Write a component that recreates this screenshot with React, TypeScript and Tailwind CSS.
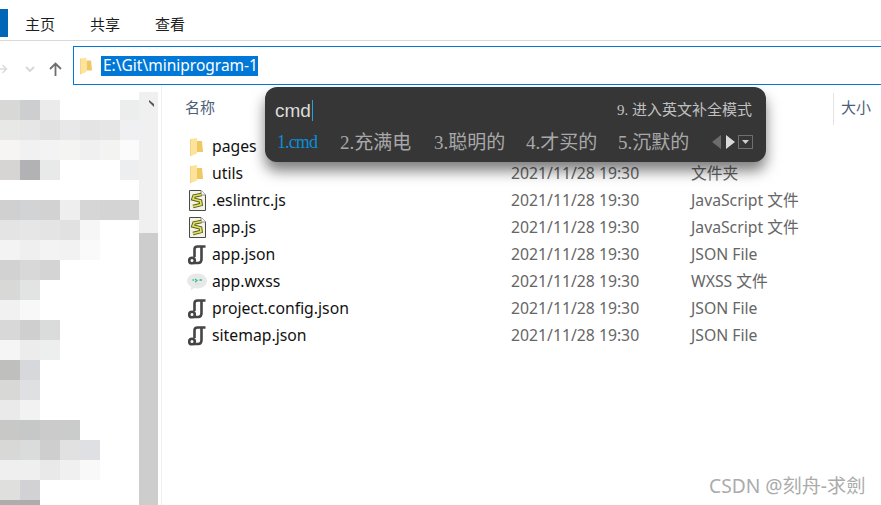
const latin = "font-['Noto_Sans','Noto_Sans_CJK_SC',sans-serif]";

// mosaic over the navigation pane, one row per 20px, one value per 20px column
const MOSAIC = [
  ["d8d8d6", "cdced0", "ebebeb", "ffffff", "ffffff", "ffffff", "eceded"],
  ["e8e8e6", "e6e6e6", "e1e1e1", "e8e8e8", "e4e4e4", "e6e6e6", "f0f0f2"],
  ["f6f5f3", "f1f1f1", "f3f3f3", "f4f4f2", "f0f0f0", "f3f3f1", "fbfbfb"],
  ["d6d5d3", "b2b2b4", "e8eaea", "ffffff", "ffffff", "ffffff", "eceef0"],
  ["ffffff", "ffffff", "ffffff", "ffffff", "ffffff", "ffffff", "ffffff"],
  ["d0d0d0", "d2d3d5", "d2d2d2", "eeeeee", "d6d6d6", "d4d4d4", "d4d4d4"],
  ["e4e4e4", "e6e6e6", "e4e4e4", "e1e1e1", "f6f6f6", "ffffff", "ffffff"],
  ["f3f3f3", "efefef", "f3f3f3", "f2f2f2", "fafafa", "ffffff", "ffffff"],
  ["d2d2d2", "d8d8d8", "d4d4d4", "ffffff", "ffffff", "ffffff", "ffffff"],
  ["d8d8d6", "e2e4e3", "ffffff", "ffffff", "ffffff", "ffffff", "ffffff"],
  ["f1f1f1", "f8f8f8", "ffffff", "ffffff", "ffffff", "ffffff", "ffffff"],
  ["d8d8d8", "cfcfcf", "dadcdc", "ffffff", "ffffff", "ffffff", "ffffff"],
  ["f5f5f5", "ececec", "edefef", "ffffff", "ffffff", "ffffff", "ffffff"],
  ["bfbfbd", "d6d8db", "ffffff", "ffffff", "ffffff", "ffffff", "ffffff"],
  ["d8d8d6", "dfe0e2", "ffffff", "ffffff", "ffffff", "ffffff", "ffffff"],
  ["eaeaea", "f2f2f2", "ffffff", "ffffff", "ffffff", "ffffff", "ffffff"],
  ["c8c8c6", "c6c8c8", "cbcbcb", "cacccc", "ffffff", "ffffff", "ffffff"],
  ["d8d8d6", "dadcdb", "cecece", "e1e1e1", "dfe0e4", "ffffff", "ffffff"],
  ["efefef", "efefef", "e9e9e9", "f0f0f0", "f9f9f9", "ffffff", "ffffff"],
  ["dfdfdd", "d2d2d4", "ffffff", "ffffff", "ffffff", "ffffff", "ffffff"],
  ["adadad", "adadad", "ffffff", "ffffff", "ffffff", "ffffff", "ffffff"],
];

type Kind = "folder" | "js" | "json" | "wxss";

const FILES: { name: string; date: string; type: string; kind: Kind }[] = [
  { name: "pages", date: "", type: "", kind: "folder" },
  { name: "utils", date: "2021/11/28 19:30", type: "文件夹", kind: "folder" },
  { name: ".eslintrc.js", date: "2021/11/28 19:30", type: "JavaScript 文件", kind: "js" },
  { name: "app.js", date: "2021/11/28 19:30", type: "JavaScript 文件", kind: "js" },
  { name: "app.json", date: "2021/11/28 19:30", type: "JSON File", kind: "json" },
  { name: "app.wxss", date: "2021/11/28 19:30", type: "WXSS 文件", kind: "wxss" },
  { name: "project.config.json", date: "2021/11/28 19:30", type: "JSON File", kind: "json" },
  { name: "sitemap.json", date: "2021/11/28 19:30", type: "JSON File", kind: "json" },
];

function FolderIcon({ className }: { className?: string }) {
  return (
    <svg viewBox="0 0 13 18" className={className}>
      <path d="M7 3 H12 L13 14 H7 Z" fill="#f0c862" />
      <path d="M0 1 L7 0 V15.5 L1 18 H0 Z" fill="#fde39c" />
      <path d="M0 1 V18 H1 V1.2 Z" fill="#f4d489" />
    </svg>
  );
}

function FileIcon({ kind }: { kind: Kind }) {
  if (kind === "folder") return <FolderIcon className="ml-[3px] h-[18px] w-[13px]" />;
  if (kind === "js")
    return (
      <svg viewBox="0 0 17 21" className="ml-[2px] h-[21px] w-[17px]">
        <path d="M0.5 0.5 H12 L16.5 5 V20.5 H0.5 Z" fill="#f3f3ea" stroke="#4a4a4a" />
        <path d="M12 0.5 V5 H16.5" fill="#fff" stroke="#8a8a8a" />
        <path d="M12.5 4.5 L5 6 L4 9 L11.5 11 L12 14.5 L4 16.5" fill="none" stroke="#56601c" strokeWidth="3.6" />
        <path d="M12.5 4.5 L5 6 L4 9 L11.5 11 L12 14.5 L4 16.5" fill="none" stroke="#e6df5c" strokeWidth="1.7" />
      </svg>
    );
  if (kind === "json")
    return (
      <svg viewBox="0 0 18 20" fill="none" className="ml-px h-[20px] w-[18px]" stroke="#454545">
        <path d="M6.5 12 V4.5 Q6.5 1.5 9.5 1.5 H17.5" strokeWidth="2.6" />
        <path d="M13.5 2 V14 Q13.5 18 10 18 H5" strokeWidth="2.6" />
        <circle cx="4" cy="15.5" r="2.8" strokeWidth="2.6" />
      </svg>
    );
  return (
    <svg viewBox="0 0 20 18" className="h-[18px] w-[20px]">
      <path d="M10 0.5 C15.5 0.5 20 3.6 20 8 C20 12.4 15.5 15.5 10 15.5 C9 15.5 8 15.4 7 15.1 L4 17.5 L4 13.6 C1.6 12.2 0 10.2 0 8 C0 3.6 4.5 0.5 10 0.5 Z" fill="#e8e8e8" />
      <path d="M8 6 L10 7.5 L8 9" fill="none" stroke="#1fc585" strokeWidth="1.2" />
      <path d="M12.5 7 H15 M5.5 7 H7" stroke="#1fc585" strokeWidth="1.5" />
      <path d="M8 11 H12" stroke="#bfe6d2" strokeWidth="1" />
    </svg>
  );
}

function NavPane() {
  return (
    <div className="relative h-full w-[162px] shrink-0 border-r border-[#f0f0f0] pt-[15px]">
      <div className="w-[140px]">
        {MOSAIC.map((row, i) => (
          <div key={i} className="flex h-5">
            {row.map((c, j) => (
              <div key={j} className="h-5 w-5" style={{ backgroundColor: `#${c}` }} />
            ))}
          </div>
        ))}
      </div>
      {/* scrollbar */}
      <div className="absolute left-[139px] top-[7px] flex h-full w-[19px] flex-col">
        <div className="h-[141px] shrink-0 bg-[#f0f0f0]" />
        <div className="flex-1 bg-[#cdcdcd]" />
      </div>
      <svg viewBox="0 0 5 7" className="absolute left-[149px] top-[15px] h-[7px] w-[5px]">
        <path d="M0 0 L5 4 V7 L0 2 Z" fill="#555" />
      </svg>
    </div>
  );
}

function ImePopup() {
  return (
    <div className="absolute left-[265px] top-[87px] h-[75px] w-[501px] rounded-[12px] bg-[#363636] shadow-[0_9px_14px_rgba(0,0,0,0.5)]">
      <div className="flex h-[45px] items-center justify-between pl-[10px] pr-[14px] pt-[2px]">
        <span className="flex items-center font-['Liberation_Sans',sans-serif] text-[19px] leading-none text-[#dcdcdc]">
          cmd
          <span className="ml-px inline-block h-[21px] w-px bg-[#2a9fe0]" />
        </span>
        <span className="font-['Liberation_Serif','Noto_Sans_CJK_SC',serif] text-[15px] leading-none text-[#c0c0c0]">
          9. 进入英文补全模式
        </span>
      </div>
      <div className="flex h-[20px] items-center whitespace-nowrap pl-[12px] font-['Liberation_Serif','Noto_Sans_CJK_SC',serif] text-[19px] leading-none text-[#a8a8a8]">
        <span className="w-[63px] text-[18px] tracking-[-0.9px] text-[#0a8ed8]">1.cmd</span>
        <span className="w-[94px]">2.充满电</span>
        <span className="w-[92px]">3.聪明的</span>
        <span className="w-[92px]">4.才买的</span>
        <span className="w-[94px]">5.沉默的</span>
        <svg viewBox="0 0 9 14" className="h-[14px] w-[9px]">
          <path d="M9 0 V14 L0 7 Z" fill="#6c6c6c" />
        </svg>
        <svg viewBox="0 0 9 14" className="ml-[5px] h-[14px] w-[9px]">
          <path d="M0 0 V14 L9 7 Z" fill="#dadada" />
        </svg>
        <span className="ml-[3px] flex h-[14px] w-[15px] items-center justify-center border border-[#6f6f6f]">
          <svg viewBox="0 0 7 4" className="h-[4px] w-[7px]">
            <path d="M0 0 H7 L3.5 4 Z" fill="#cfcfcf" />
          </svg>
        </span>
      </div>
    </div>
  );
}

export default function App() {
  return (
    <div className={`relative h-[505px] w-[881px] overflow-hidden bg-white ${latin}`}>
      {/* ribbon tabs */}
      <div className="flex h-[41px] items-center border-b border-[#d9d9d9] pt-[9px] text-[15px] text-[#1e1e1e]">
        <div className="h-[28px] w-2 -translate-y-[2px] bg-[#0067b8]" />
        <div className="ml-[17px] flex gap-[35px]">
          <span>主页</span>
          <span>共享</span>
          <span>查看</span>
        </div>
      </div>

      {/* address bar */}
      <div className="flex h-[44px] items-end">
        <div className="flex w-[73px] items-center pb-[9px]">
          <svg viewBox="0 0 8 12" className="ml-[-1px] h-[12px] w-[9px]" fill="none" stroke="#dcdcdc" strokeWidth="1.6">
            <path d="M0 6 H7 M3 2 L7 6 L3 10" />
          </svg>
          <svg viewBox="0 0 10 6" className="ml-[17px] h-[6px] w-[10px]" fill="none" stroke="#d6d6d6" strokeWidth="1.8">
            <path d="M1 1 L5 5 L9 1" />
          </svg>
          <svg viewBox="0 0 13 14" className="ml-[14px] h-[14px] w-[13px]" fill="none" stroke="#6e6e6e" strokeWidth="1.8">
            <path d="M6.5 14 V1.5 M1 7 L6.5 1.5 L12 7" />
          </svg>
        </div>
        <div className="flex h-[39px] flex-1 items-center border-[1.5px] border-r-0 border-[#0078d7] pl-[6px]">
          <FolderIcon className="h-[18px] w-[12px]" />
          <span className="ml-[9px] flex h-[20px] items-center bg-[#0078d7] pl-[2px] text-[15.5px] leading-none text-white">
            E:\Git\miniprogram-1
          </span>
        </div>
      </div>

      <div className="flex h-[420px]">
        <NavPane />
        <div className="min-w-0 flex-1">
          {/* column header */}
          <div className="flex h-[48px] items-center pl-[23px] pt-[2px] text-[15px] leading-none text-[#4c607a]">
            <span className="w-[648px] -translate-y-[3px]">名称</span>
            <span className="h-[32px] w-px -translate-y-px bg-[#e3e3e3]" />
            <span className="ml-[7px] -translate-y-[3px] whitespace-nowrap">大小</span>
          </div>
          {FILES.map((f) => (
            <div key={f.name} className="flex h-[27px] items-center whitespace-nowrap text-[15.75px] leading-none">
              <span className="flex w-[50px] shrink-0 pl-[25px]">
                <FileIcon kind={f.kind} />
              </span>
              <span className="w-[299px] shrink-0 text-[#111]">{f.name}</span>
              <span className="w-[180px] shrink-0 text-[#666]">{f.date}</span>
              <span className="text-[#666]">{f.type}</span>
            </div>
          ))}
        </div>
      </div>

      <ImePopup />

      <span className="absolute left-[709px] top-[473px] whitespace-nowrap text-[19.2px] leading-[26px] text-[#ababab]">
        CSDN @刻舟-求劍
      </span>
    </div>
  );
}
